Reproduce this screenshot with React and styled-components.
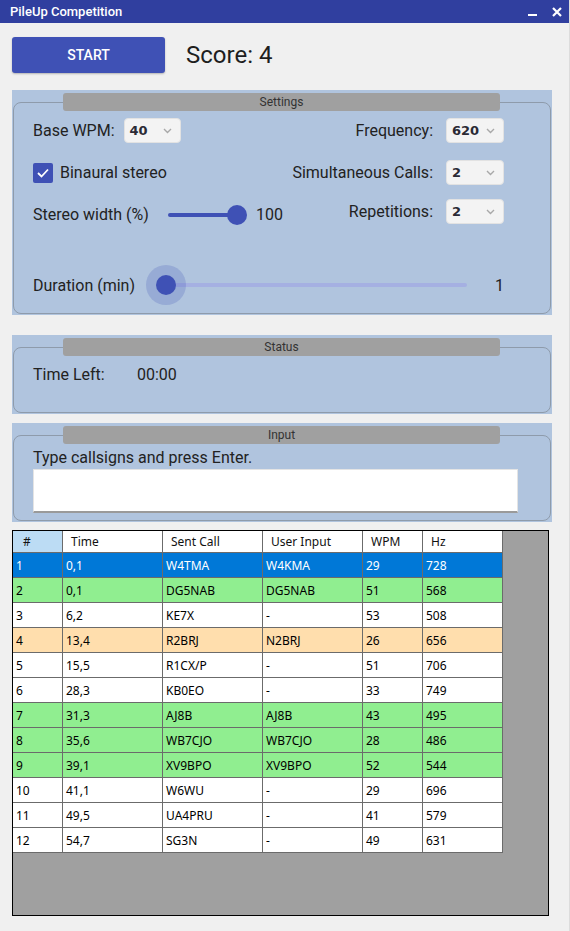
import React from "react";
import styled, { createGlobalStyle } from "styled-components";

const rows = [
  ["1", "0,1", "W4TMA", "W4KMA", "29", "728", "selected"],
  ["2", "0,1", "DG5NAB", "DG5NAB", "51", "568", "ok"],
  ["3", "6,2", "KE7X", "-", "53", "508", ""],
  ["4", "13,4", "R2BRJ", "N2BRJ", "26", "656", "partial"],
  ["5", "15,5", "R1CX/P", "-", "51", "706", ""],
  ["6", "28,3", "KB0EO", "-", "33", "749", ""],
  ["7", "31,3", "AJ8B", "AJ8B", "43", "495", "ok"],
  ["8", "35,6", "WB7CJO", "WB7CJO", "28", "486", "ok"],
  ["9", "39,1", "XV9BPO", "XV9BPO", "52", "544", "ok"],
  ["10", "41,1", "W6WU", "-", "29", "696", ""],
  ["11", "49,5", "UA4PRU", "-", "41", "579", ""],
  ["12", "54,7", "SG3N", "-", "49", "631", ""],
];

const headers = ["#", "Time", "Sent Call", "User Input", "WPM", "Hz"];

const rowColors = {
  selected: "#0078d7",
  ok: "#90ee90",
  partial: "#ffdead",
  "": "#ffffff",
};

const Chevron = () => (
  <svg width="9" height="6" viewBox="0 0 9 6">
    <polyline points="1,1 4.5,4.5 8,1" fill="none" stroke="#a8a8a8" strokeWidth="1.4" />
  </svg>
);

const App = () => {
  return (
    <>
      <GlobalStyle />
      <Window>
        <TitleBar>
          <Title>PileUp Competition</Title>
          <WindowButtons>
            <svg width="10" height="10" viewBox="0 0 10 10">
              <rect x="1" y="7" width="9" height="2" fill="#fff" />
            </svg>
            <svg width="10" height="10" viewBox="0 0 10 10">
              <path d="M1 1 L9 9 M9 1 L1 9" stroke="#fff" strokeWidth="2.2" />
            </svg>
          </WindowButtons>
        </TitleBar>

        <Content>
          <TopRow>
            <StartButton>START</StartButton>
            <Score>Score: 4</Score>
          </TopRow>

          <Group $mt={17}>
            <GroupHeader>Settings</GroupHeader>
            <Frame $pad="15px 46px 8px 19px">
              <Columns>
                <Column>
                  <Row $gap={9}>
                    <Label>Base WPM:</Label>
                    <Combo $w={57}>
                      <span>40</span>
                      <Chevron />
                    </Combo>
                  </Row>
                  <Row $mt={17} $gap={7}>
                    <Checkbox>
                      <svg width="14" height="12" viewBox="0 0 14 12">
                        <polyline points="2,6 5.5,9.5 12,2.5" fill="none" stroke="#fff" strokeWidth="1.8" />
                      </svg>
                    </Checkbox>
                    <Label>Binaural stereo</Label>
                  </Row>
                  <Row $mt={17} $gap={0}>
                    <Label $w={135}>Stereo width (%)</Label>
                    <StereoSlider>
                      <Track $w={69} />
                      <Thumb $left={59} />
                    </StereoSlider>
                    <Value>100</Value>
                  </Row>
                </Column>
                <Column $right>
                  <Row $gap={13}>
                    <Label>Frequency:</Label>
                    <Combo $w={58}>
                      <span>620</span>
                      <Chevron />
                    </Combo>
                  </Row>
                  <Row $mt={17} $gap={13}>
                    <Label>Simultaneous Calls:</Label>
                    <Combo $w={58}>
                      <span>2</span>
                      <Chevron />
                    </Combo>
                  </Row>
                  <Row $mt={14} $gap={13}>
                    <Label>Repetitions:</Label>
                    <Combo $w={58}>
                      <span>2</span>
                      <Chevron />
                    </Combo>
                  </Row>
                </Column>
              </Columns>
              <DurationRow>
                <Label $w={113}>Duration (min)</Label>
                <DurationSlider>
                  <LightTrack />
                  <Halo />
                  <Thumb $left={10} $top={10} />
                </DurationSlider>
                <EndValue>1</EndValue>
              </DurationRow>
            </Frame>
          </Group>

          <Group $mt={20}>
            <GroupHeader>Status</GroupHeader>
            <Frame $h={66} $pad="16px 19px 0 19px">
              <Row $h={20} $gap={0}>
                <Label $w={104}>Time Left:</Label>
                <Label>00:00</Label>
              </Row>
            </Frame>
          </Group>

          <Group $mt={9}>
            <GroupHeader>Input</GroupHeader>
            <Frame $h={86} $pad="11px 32px 0 19px">
              <Row $h={20}>
                <Label>Type callsigns and press Enter.</Label>
              </Row>
              <TextInput />
            </Frame>
          </Group>

          <GridArea>
            <Grid>
              {headers.map((h, i) => (
                <HeaderCell key={h} $active={i === 0}>
                  {h}
                </HeaderCell>
              ))}
              {rows.map((r) =>
                r.slice(0, 6).map((c, i) => (
                  <Cell key={r[0] + "-" + i} $kind={r[6]}>
                    {c}
                  </Cell>
                ))
              )}
            </Grid>
          </GridArea>
        </Content>
      </Window>
    </>
  );
};

export default App;

// Styled Components
const GlobalStyle = createGlobalStyle`
  body {
    margin: 0;
    background: #f0f0f0;
    font-family: Roboto, "Noto Sans", sans-serif;
  }
`;

const Window = styled.div`
  width: 570px;
  height: 931px;
  display: flex;
  flex-direction: column;
  background: #f0f0f0;
  overflow: hidden;
  box-sizing: border-box;
  border-right: 1px solid #dcdcdc;
`;

const TitleBar = styled.div`
  height: 23px;
  flex-shrink: 0;
  background: #303f9f;
  display: flex;
  align-items: center;
  justify-content: space-between;
  padding: 0 7px 0 10px;
`;

const Title = styled.div`
  color: #ffffff;
  font-size: 13px;
  font-weight: 500;
`;

const WindowButtons = styled.div`
  display: flex;
  align-items: center;
  gap: 15px;
`;

const Content = styled.div`
  display: flex;
  flex-direction: column;
  padding: 14px 0 0 12px;
  width: 540px;
`;

const TopRow = styled.div`
  display: flex;
  align-items: center;
  gap: 21px;
  height: 36px;
`;

const StartButton = styled.button`
  width: 153px;
  height: 36px;
  background: #3f51b5;
  color: #ffffff;
  border: none;
  border-radius: 3px;
  font-family: Roboto, sans-serif;
  font-size: 14px;
  font-weight: 500;
  box-shadow: 0 1px 2px rgba(0, 0, 0, 0.25);
`;

const Score = styled.div`
  font-size: 24px;
  color: #1e1e1e;
`;

const Group = styled.div`
  margin-top: ${(p) => p.$mt}px;
  background: #b0c4de;
  padding: 3px 1px 1px;
  display: flex;
  flex-direction: column;
`;

const GroupHeader = styled.div`
  position: relative;
  z-index: 1;
  height: 18px;
  margin: 0 51px 0 50px;
  background: #a0a0a0;
  border-radius: 3px;
  font-size: 12px;
  line-height: 18px;
  color: #333333;
  text-align: center;
`;

const Frame = styled.div`
  margin-top: -9px;
  border: 1px solid #8e9bab;
  border-radius: 8px;
  box-sizing: border-box;
  padding: ${(p) => p.$pad};
  ${(p) => (p.$h ? `height: ${p.$h}px;` : "")}
`;

const Columns = styled.div`
  display: flex;
  justify-content: space-between;
`;

const Column = styled.div`
  display: flex;
  flex-direction: column;
  align-items: ${(p) => (p.$right ? "flex-end" : "flex-start")};
`;

const Row = styled.div`
  display: flex;
  align-items: center;
  height: ${(p) => p.$h || 25}px;
  margin-top: ${(p) => p.$mt || 0}px;
  gap: ${(p) => (p.$gap ?? 8)}px;
`;

const Label = styled.div`
  font-size: 16px;
  color: #222222;
  white-space: nowrap;
  ${(p) => (p.$w ? `width: ${p.$w}px; flex-shrink: 0;` : "")}
`;

const Combo = styled.div`
  width: ${(p) => p.$w}px;
  height: 25px;
  box-sizing: border-box;
  display: flex;
  align-items: center;
  justify-content: space-between;
  padding: 0 8px 0 5px;
  background: #f3f3f3;
  border: 1px solid #e2e2e2;
  border-radius: 4px;
  font-family: "DejaVu Sans", sans-serif;
  font-weight: bold;
  font-size: 13px;
  color: #2a2a35;
`;

const Checkbox = styled.div`
  width: 20px;
  height: 20px;
  background: #3f51b5;
  border-radius: 2px;
  display: flex;
  align-items: center;
  justify-content: center;
`;

const StereoSlider = styled.div`
  position: relative;
  width: 79px;
  height: 20px;
  margin-right: 9px;
`;

const Track = styled.div`
  position: absolute;
  left: 0;
  top: 8px;
  width: ${(p) => p.$w}px;
  height: 4px;
  border-radius: 2px;
  background: #3f51b5;
`;

const Thumb = styled.div`
  position: absolute;
  left: ${(p) => p.$left}px;
  top: ${(p) => p.$top || 0}px;
  width: 20px;
  height: 20px;
  border-radius: 50%;
  background: #3f51b5;
`;

const Value = styled.div`
  font-size: 16px;
  color: #222222;
`;

const DurationRow = styled.div`
  display: flex;
  align-items: center;
  height: 40px;
  margin-top: 38px;
`;

const DurationSlider = styled.div`
  position: relative;
  width: 321px;
  height: 40px;
`;

const LightTrack = styled.div`
  position: absolute;
  left: 20px;
  right: 0;
  top: 18px;
  height: 4px;
  border-radius: 2px;
  background: #a5b0e2;
`;

const Halo = styled.div`
  position: absolute;
  left: 0;
  top: 0;
  width: 40px;
  height: 40px;
  border-radius: 50%;
  background: rgba(63, 81, 181, 0.22);
`;

const EndValue = styled.div`
  flex: 1;
  text-align: right;
  font-size: 16px;
  color: #222222;
`;

const TextInput = styled.div`
  margin-top: 2px;
  height: 44px;
  box-sizing: border-box;
  background: #ffffff;
  border: 1px solid #e4e4e4;
  border-bottom: 2px solid #9a9a9a;
`;

const GridArea = styled.div`
  margin-top: 8px;
  width: 537px;
  height: 386px;
  box-sizing: border-box;
  border: 1px solid #000000;
  background: #a0a0a0;
`;

const Grid = styled.div`
  display: grid;
  grid-template-columns: 50px 100px 100px 100px 60px 80px;
  grid-auto-rows: 25px;
  grid-template-rows: 22px;
  width: 490px;
  font-family: "Noto Sans", sans-serif;
  font-size: 12px;
`;

const HeaderCell = styled.div`
  box-sizing: border-box;
  border-right: 1px solid #6b6b6b;
  border-bottom: 1px solid #6b6b6b;
  background: ${(p) => (p.$active ? "#bcdcf4" : "#ffffff")};
  color: #111111;
  display: flex;
  align-items: center;
  padding-left: ${(p) => (p.$active ? 10 : 8)}px;
`;

const Cell = styled.div`
  box-sizing: border-box;
  border-right: 1px solid #6b6b6b;
  border-bottom: 1px solid #6b6b6b;
  background: ${(p) => rowColors[p.$kind]};
  color: ${(p) => (p.$kind === "selected" ? "#ffffff" : "#000000")};
  display: flex;
  align-items: center;
  padding-left: 3px;
`;
